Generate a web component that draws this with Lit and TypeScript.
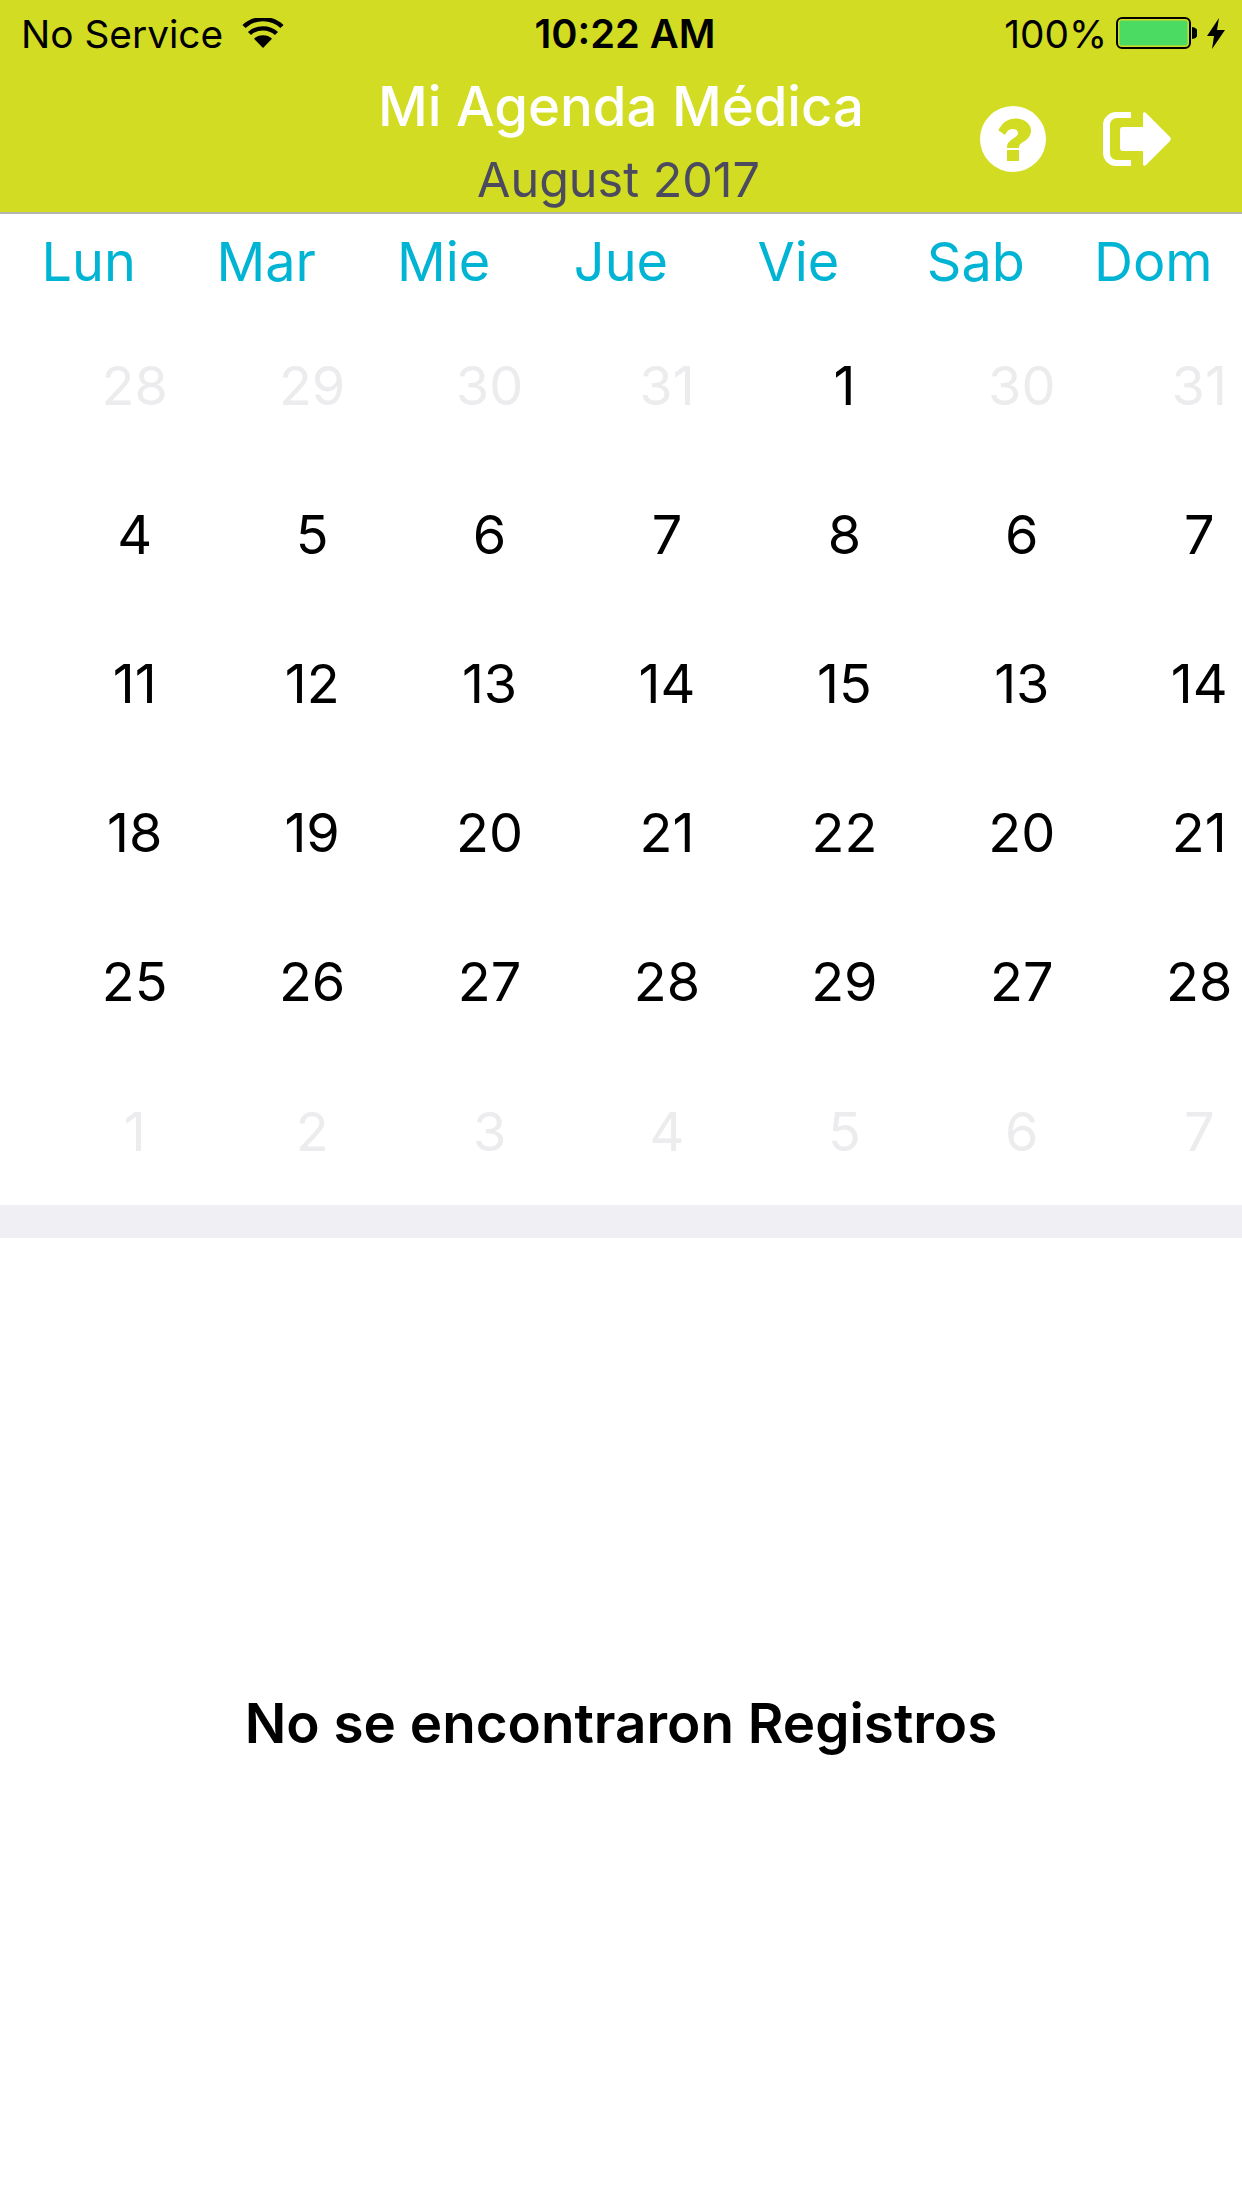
import { LitElement, html, css } from "lit";
import { customElement } from "lit/decorators.js";

const WEEK = ["Lun", "Mar", "Mie", "Jue", "Vie", "Sab", "Dom"];
type D = [string, boolean];
const m = (s: string, faded = false): D[] => s.split(" ").map((x) => [x, faded] as D);
const ROWS: D[][] = [
  [...m("28 29 30 31", true), ...m("1"), ...m("30 31", true)],
  m("4 5 6 7 8 6 7"),
  m("11 12 13 14 15 13 14"),
  m("18 19 20 21 22 20 21"),
  m("25 26 27 28 29 27 28"),
  m("1 2 3 4 5 6 7", true),
];

@customElement("app-root")
export class AppRoot extends LitElement {
  static styles = css`
    :host {
      display: block;
      width: 1242px;
      height: 2208px;
      background: #fff;
      overflow: hidden;
      font-family: Inter, "Liberation Sans", sans-serif;
      color: #000;
    }
    .header {
      position: relative;
      height: 212px;
      background: #d2dc22;
      border-bottom: 2px solid #b4b4ac;
    }
    .status {
      display: grid;
      grid-template-columns: 1fr auto 1fr;
      align-items: center;
      height: 66px;
      padding: 0 17px 0 21px;
      font-size: 38.8px;
    }
    .left, .right { display: flex; align-items: center; }
    .right { justify-content: flex-end; }
    .time { font-weight: 600; font-size: 39.8px; margin-left: 4px; }
    .wifi { margin-left: 19px; width: 42px; height: 30px; }
    .battery { margin-left: 9px; width: 81px; height: 32px; }
    .bolt { margin-left: 10px; width: 18px; height: 31px; }
    .titles { text-align: center; }
    .title {
      color: #fff;
      font-size: 54.5px;
      font-weight: 500;
      line-height: 62px;
      margin-top: 9px;
    }
    .sub {
      color: #4b4a5e;
      font-size: 48.5px;
      line-height: 54px;
      margin: 16px 5px 0 0;
    }
    .actions {
      position: absolute;
      top: 106px;
      left: 980px;
      display: flex;
      gap: 57px;
      align-items: center;
    }
    .week {
      display: grid;
      grid-template-columns: repeat(7, 1fr);
      height: 95px;
      align-items: center;
      color: #02b4d3;
      font-size: 54px;
      text-align: center;
    }
    .dates {
      display: grid;
      grid-template-columns: repeat(7, 177.43px);
      grid-auto-rows: 149.1px;
      margin-left: 46px;
      padding-top: 2px;
      width: 1196px;
      overflow: hidden;
      font-size: 54px;
      text-align: center;
      align-items: center;
      height: 894px;
    }
    .faded { color: #ececee; }
    .divider { height: 33px; background: #efeff4; }
    .empty {
      height: 970px;
      display: flex;
      align-items: center;
      justify-content: center;
      font-size: 54.8px;
      font-weight: 600;
    }
  `;

  render() {
    return html`
      <div class="header">
        <div class="status">
          <div class="left">
            <span>No Service</span>
            <svg class="wifi" viewBox="0 0 42 32" preserveAspectRatio="none">
              <path d="M21 32 L12 22 A13 13 0 0 1 30 22 Z" fill="#000"></path>
              <path d="M7.500 16.500 A19.500 19.500 0 0 1 34.500 16.500" fill="none" stroke="#000" stroke-width="4.500"></path>
              <path d="M2 9 A27 27 0 0 1 40 9" fill="none" stroke="#000" stroke-width="4.500"></path>
            </svg>
          </div>
          <div class="time">10:22 AM</div>
          <div class="right">
            <span>100%</span>
            <svg class="battery" viewBox="0 0 81 32">
              <rect x="1" y="1" width="73" height="30" rx="5" fill="none" stroke="#000" stroke-width="2"></rect>
              <rect x="3.500" y="3.500" width="68" height="25" rx="2" fill="#4cdb62"></rect>
              <path d="M76 10 a6 6 0 0 1 0 12 Z" fill="#000"></path>
            </svg>
            <svg class="bolt" viewBox="0 0 18 31">
              <path d="M12 0 L0 18 H7 L5 31 L18 12 H10 Z" fill="#000"></path>
            </svg>
          </div>
        </div>
        <div class="titles">
          <div class="title">Mi Agenda Médica</div>
          <div class="sub">August 2017</div>
        </div>
        <div class="actions">
          <svg width="66" height="66" viewBox="0 0 66 66">
            <path fill="#fff" fill-rule="evenodd" d="M33 0a33 33 0 1 1 0 66a33 33 0 0 1 0-66ZM27 44v11h12V44ZM18 24l7 5c2-4 4-6 8-6c3 0 5 1.500 5 4c0 2-1.500 3.500-4 5c-4 2.500-7 5-7 9v1h12c0-3 1-4 5-6.500c4-2.500 7-6 7-11c0-7-7-12-15-12c-8 0-14 4-18 12.500Z"></path>
          </svg>
          <svg width="68" height="54" viewBox="0 0 68 54">
            <path fill="#fff" d="M28 0v6H14c-4 0-7 3-7 7v28c0 4 3 7 7 7h14v6H13C6 54 0 48 0 41V13C0 6 6 0 13 0ZM40 1c1-1 2-1 3 0l24 24c1 1 1 3 0 4L43 53c-1 1-3 1-3-1V39H20c-2 0-3-1-3-3V18c0-2 1-3 3-3h20V2Z"></path>
          </svg>
        </div>
      </div>
      <div class="week">${WEEK.map((w) => html`<div>${w}</div>`)}</div>
      <div class="dates">
        ${ROWS.flat().map(([d, f]) => html`<div class=${f ? "faded" : ""}>${d}</div>`)}
      </div>
      <div class="divider"></div>
      <div class="empty">No se encontraron Registros</div>
    `;
  }
}
